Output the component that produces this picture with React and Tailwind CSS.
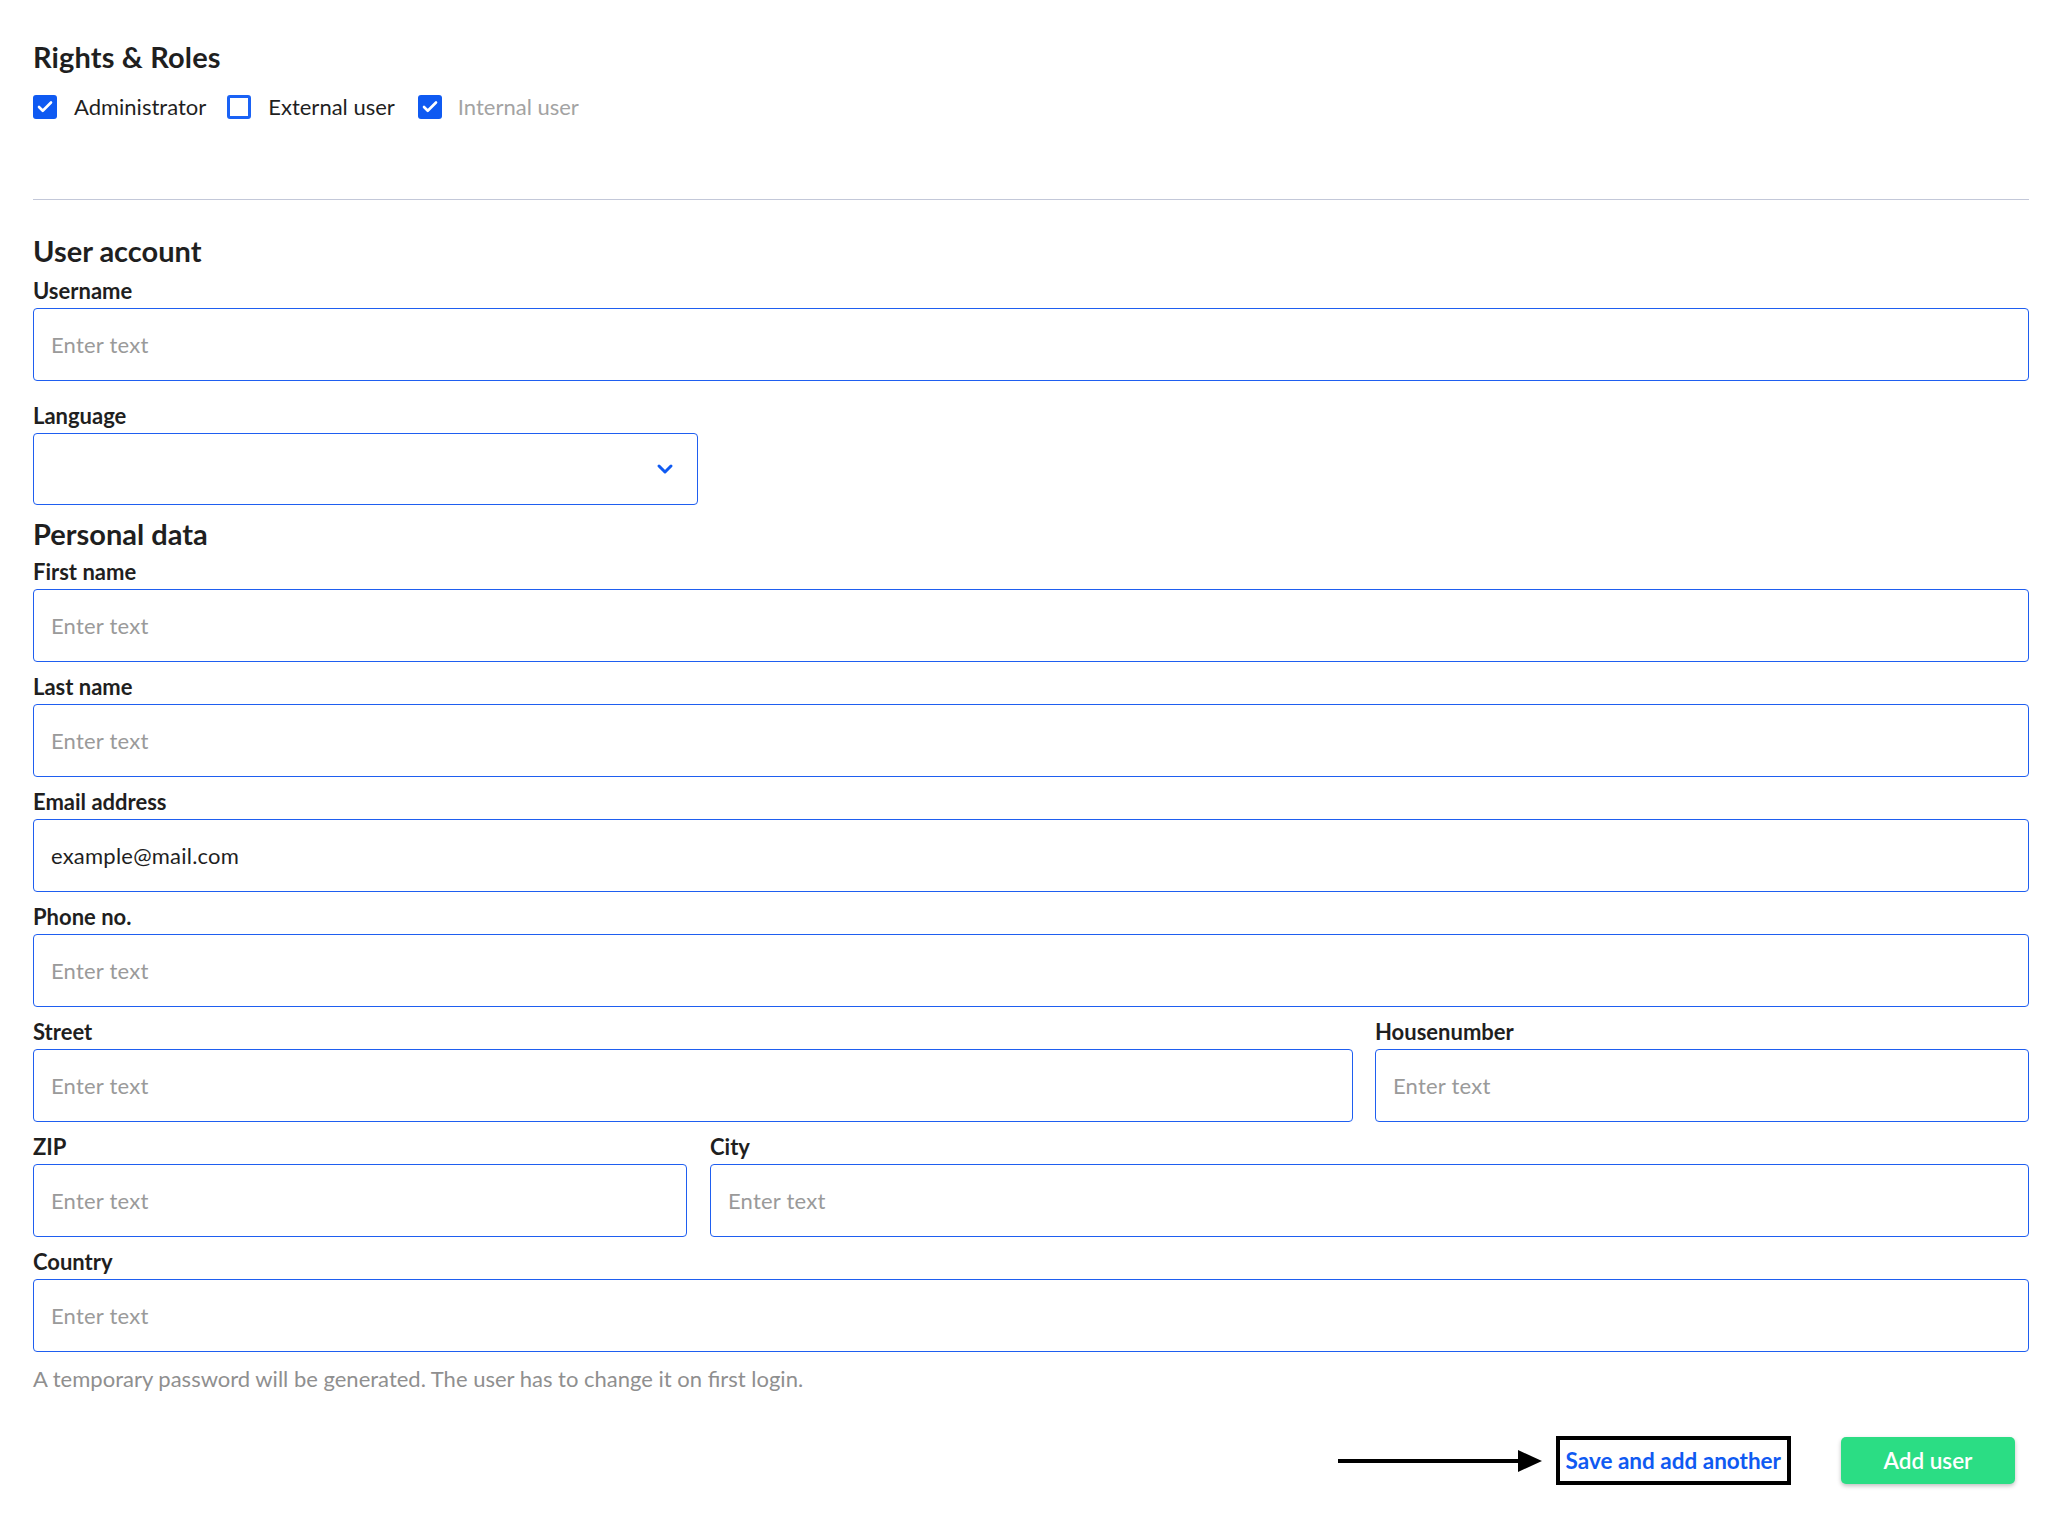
import { Check, ChevronDown } from "lucide-react";

const font = { fontFamily: "Lato, 'Noto Sans', sans-serif" };

function Box({ checked }) {
  return checked ? (
    <span className="shrink-0 flex items-center justify-center w-[24px] h-[24px] rounded-[3px] bg-[#0f5af2]">
      <Check className="w-[18px] h-[18px] text-white" strokeWidth={3.5} />
    </span>
  ) : (
    <span className="shrink-0 block w-[24px] h-[24px] rounded-[3px] border-[3px] border-[#1a62f5] bg-white" />
  );
}

function Field({ label, value, className = "" }) {
  return (
    <div className={className}>
      <label className="block text-[22px] leading-[26px] font-bold text-[#1f1f1f]">
        {label}
      </label>
      <input
        type="text"
        placeholder="Enter text"
        defaultValue={value}
        className="mt-[4px] w-full h-[73px] border border-[#1f5ef0] rounded-[4px] px-[17px] text-[22px] tracking-[0.01em] text-[#1f1f1f] placeholder:text-[#9a9a9a] focus:outline-none"
      />
    </div>
  );
}

export default function App() {
  return (
    <div className="bg-white min-h-screen px-[33px] pt-[40px] pb-[40px]" style={font}>
      {/* Rights & Roles */}
      <h2 className="text-[29px] leading-[34px] font-bold tracking-[0.005em] text-[#1f1f1f]">
        Rights &amp; Roles
      </h2>
      <div className="mt-[21px] flex items-center text-[22px] leading-[24px]">
        <Box checked />
        <span className="ml-[17px] text-[#1f1f1f]">Administrator</span>
        <span className="ml-[21px]">
          <Box />
        </span>
        <span className="ml-[17px] text-[#1f1f1f]">External user</span>
        <span className="ml-[23px]">
          <Box checked />
        </span>
        <span className="ml-[16px] text-[#a3a3a3]">Internal user</span>
      </div>

      <div className="mt-[80px] h-px bg-[#c3c8d9]" />

      {/* User account */}
      <h2 className="mt-[34px] text-[29px] leading-[34px] font-bold text-[#1f1f1f]">
        User account
      </h2>
      <Field label="Username" className="mt-[10px]" />
      <div className="mt-[22px]">
        <label className="block text-[22px] leading-[26px] font-bold text-[#1f1f1f]">
          Language
        </label>
        <div className="mt-[4px] w-[665px] h-[72px] border border-[#1f5ef0] rounded-[4px] flex items-center justify-end pr-[20px]">
          <ChevronDown className="w-[24px] h-[24px] text-[#0f5af2]" strokeWidth={3} />
        </div>
      </div>

      {/* Personal data */}
      <h2 className="mt-[12px] text-[29px] leading-[34px] font-bold text-[#1f1f1f]">
        Personal data
      </h2>
      <div className="mt-[8px] flex flex-col gap-[12px]">
        <Field label="First name" />
        <Field label="Last name" />
        <Field label="Email address" value="example@mail.com" />
        <Field label="Phone no." />
        <div className="grid grid-cols-[1320px_minmax(0,1fr)] gap-x-[22px]">
          <Field label="Street" />
          <Field label="Housenumber" />
        </div>
        <div className="grid grid-cols-[654px_minmax(0,1fr)] gap-x-[23px]">
          <Field label="ZIP" />
          <Field label="City" />
        </div>
        <Field label="Country" />
      </div>
      <p className="mt-[14px] text-[22px] leading-[26px] text-[#8f8f8f]">
        A temporary password will be generated. The user has to change it on first login.
      </p>

      {/* Actions */}
      <div className="mt-[44px] flex items-center justify-end pr-[14px]">
        <svg width="204" height="26" viewBox="0 0 204 26" className="mr-[14px]">
          <line x1="0" y1="13" x2="184" y2="13" stroke="#000" strokeWidth="4" />
          <polygon points="180,2 204,13 180,24" fill="#000" />
        </svg>
        <button className="h-[49px] border-[4px] border-black px-[6px] text-[22.5px] font-bold text-[#0f5af2] bg-white">
          Save and add another
        </button>
        <button className="ml-[50px] w-[174px] h-[47px] rounded-[5px] bg-[#2bdd84] text-white text-[22.5px] font-semibold shadow-[0_2px_4px_rgba(0,0,0,0.25)]">
          Add user
        </button>
      </div>
    </div>
  );
}
